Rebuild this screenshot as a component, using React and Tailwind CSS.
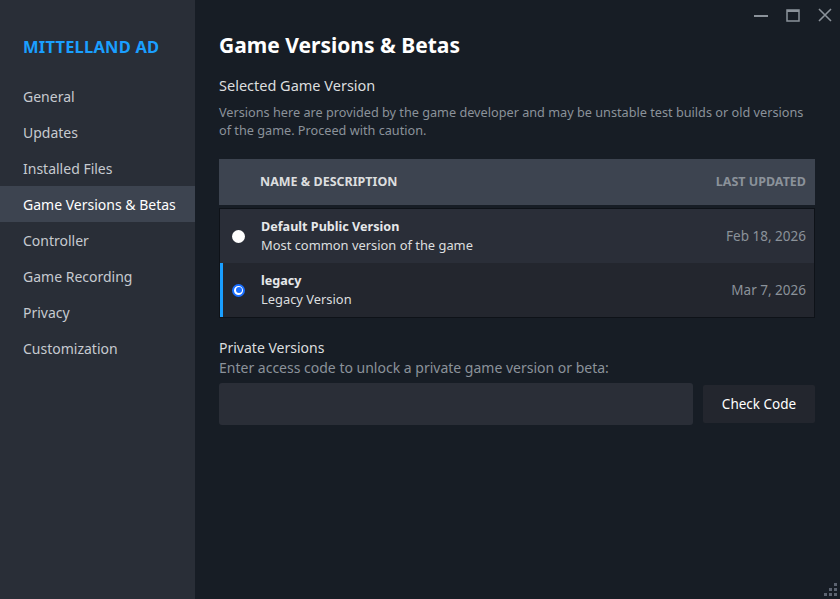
const navItems = [
  "General",
  "Updates",
  "Installed Files",
  "Game Versions & Betas",
  "Controller",
  "Game Recording",
  "Privacy",
  "Customization",
];

const versions = [
  {
    name: "Default Public Version",
    desc: "Most common version of the game",
    date: "Feb 18, 2026",
    selected: false,
  },
  {
    name: "legacy",
    desc: "Legacy Version",
    date: "Mar 7, 2026",
    selected: true,
  },
];

const Radio = ({ checked }) =>
  checked ? (
    <span className="w-[13px] h-[13px] rounded-full bg-white border-[2px] border-[#1a6fff] flex items-center justify-center">
      <span className="w-[6px] h-[6px] rounded-full bg-[#1a6fff]" />
    </span>
  ) : (
    <span className="w-[13px] h-[13px] rounded-full bg-white" />
  );

export default function App() {
  return (
    <div
      className="w-[840px] h-[599px] flex bg-[#171d25] overflow-hidden relative"
      style={{ fontFamily: '"Noto Sans", "Open Sans", sans-serif' }}
    >
      {/* Sidebar */}
      <div className="w-[195px] shrink-0 bg-[#292e37] flex flex-col">
        <div className="pl-[23px] pt-[35px] h-[78px] text-[16.5px] font-bold text-[#1a9fff] tracking-[0.2px]">
          MITTELLAND AD
        </div>
        <div className="flex flex-col">
          {navItems.map((item) => (
            <div
              key={item}
              className={
                item === "Game Versions & Betas"
                  ? "h-[36px] pl-[23px] flex items-center text-[14px] text-white bg-[#3d4450]"
                  : "h-[36px] pl-[23px] flex items-center text-[14px] text-[#c6cad0]"
              }
            >
              {item}
            </div>
          ))}
        </div>
      </div>

      {/* Main */}
      <div className="flex-1 pl-[24px] pr-[25px] flex flex-col">
        <div className="pt-[30px] text-[21px] font-bold text-white leading-[30px]">
          Game Versions &amp; Betas
        </div>
        <div className="mt-[15px] text-[14.5px] text-[#dcdedf] leading-[20px]">
          Selected Game Version
        </div>
        <div className="mt-[8px] text-[12.7px] text-[#8b929a] leading-[18px]">
          Versions here are provided by the game developer and may be unstable test builds or old versions
          of the game. Proceed with caution.
        </div>

        {/* Table */}
        <div className="mt-[20px] flex flex-col">
          <div className="h-[46px] bg-[#3d4450] flex items-center pl-[41px] pr-[9px] text-[12.5px] font-bold">
            <span className="flex-1 text-[#dcdedf]">NAME &amp; DESCRIPTION</span>
            <span className="text-[#8b929a]">LAST UPDATED</span>
          </div>
          <div className="mt-[3px] border border-[#0e1218] flex flex-col">
            {versions.map((v) => (
              <div
                key={v.name}
                className={
                  v.selected
                    ? "h-[54px] bg-[#23262e] flex items-center border-l-[3px] border-[#1a9fff] pl-[9px] pr-[8px]"
                    : "h-[54px] bg-[#2a2e38] flex items-center border-l-[3px] border-transparent pl-[9px] pr-[8px]"
                }
              >
                <Radio checked={v.selected} />
                <div className="flex-1 pl-[16px] flex flex-col">
                  <span className="text-[12.6px] font-bold text-[#e6e8ea] leading-[18px]">{v.name}</span>
                  <span className="text-[12.9px] text-[#dcdedf] leading-[19px]">{v.desc}</span>
                </div>
                <span className="text-[13.5px] text-[#8b929a]">{v.date}</span>
              </div>
            ))}
          </div>
        </div>

        {/* Private versions */}
        <div className="mt-[20px] text-[14px] text-[#dcdedf] leading-[20px]">Private Versions</div>
        <div className="text-[14px] text-[#8b929a] leading-[20px]">
          Enter access code to unlock a private game version or beta:
        </div>
        <div className="mt-[5px] flex items-center gap-[10px]">
          <div className="flex-1 h-[42px] bg-[#2a2e37] rounded-[3px]" />
          <button className="w-[112px] h-[38px] bg-[#23262e] rounded-[2px] text-[13.5px] text-white">
            Check Code
          </button>
        </div>
      </div>

      {/* Window controls */}
      <div className="absolute top-[7px] right-[8px] flex items-center gap-[18px]">
        <svg width="14" height="16" viewBox="0 0 14 16">
          <line x1="0" y1="9" x2="14" y2="9" stroke="#8b929a" strokeWidth="2" />
        </svg>
        <svg width="14" height="14" viewBox="0 0 14 14">
          <rect x="1" y="2" width="12" height="11" fill="none" stroke="#8b929a" strokeWidth="1.5" />
          <line x1="1" y1="3" x2="13" y2="3" stroke="#8b929a" strokeWidth="2" />
        </svg>
        <svg width="14" height="14" viewBox="0 0 14 14">
          <path d="M1 1 L13 13 M13 1 L1 13" stroke="#8b929a" strokeWidth="1.6" />
        </svg>
      </div>

      {/* Resize grip */}
      <svg className="absolute right-[3px] bottom-[3px]" width="13" height="13" viewBox="0 0 13 13">
        <rect x="10" y="0" width="3" height="3" fill="#5c6370" />
        <rect x="5" y="5" width="3" height="3" fill="#5c6370" />
        <rect x="10" y="5" width="3" height="3" fill="#5c6370" />
        <rect x="0" y="10" width="3" height="3" fill="#5c6370" />
        <rect x="5" y="10" width="3" height="3" fill="#5c6370" />
        <rect x="10" y="10" width="3" height="3" fill="#5c6370" />
      </svg>
    </div>
  );
}
